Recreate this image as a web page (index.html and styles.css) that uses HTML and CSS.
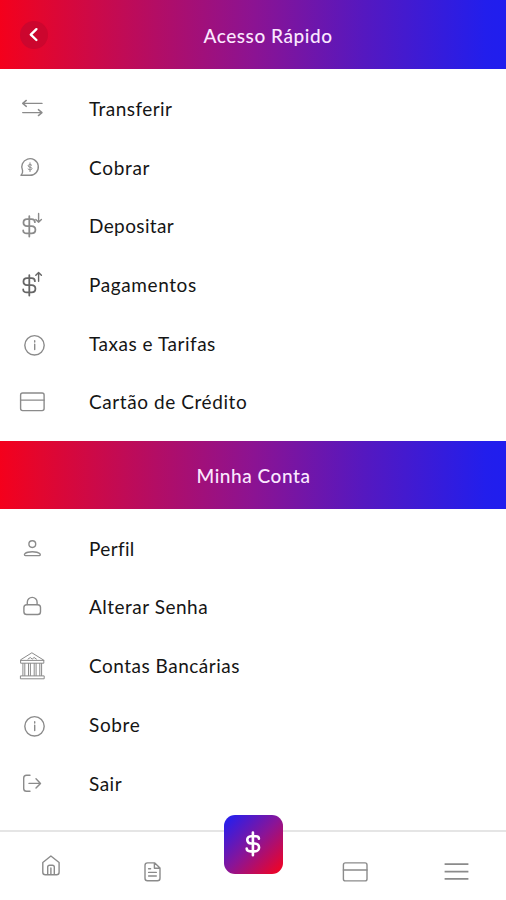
FILE: index.html
```html
<!DOCTYPE html>
<html lang="pt-BR">
<head>
<meta charset="utf-8">
<meta name="viewport" content="width=device-width, initial-scale=1">
<title>Acesso Rápido</title>
<link rel="stylesheet" href="styles.css">
</head>
<body>
<div class="app">
  <header class="bar">
    <button class="back" aria-label="Voltar"><svg viewBox="0 0 28 28"><path d="M16.4 8.2 10.8 13.6l5.6 5.4"/></svg></button>
    <h1 class="title title-quick">Acesso Rápido</h1>
  </header>
  <ul class="menu">
    <li class="row"><svg class="icon" viewBox="0 0 32 32"><path d="M26 10.4H6.7M10.3 7.4 6.7 10.4l3.6 3M6.7 19.6H26M22.4 16.6l3.6 3-3.6 3"/></svg><span class="l-transferir">Transferir</span></li>
    <li class="row"><svg class="icon" viewBox="0 0 32 32"><path d="M5 23.3h9a8.3 8.3 0 1 0-7.4-4.6Q7 21.6 5 23.3Z"/><path class="thin" d="M15.8 13.2c-.6-1-3.7-1-3.7.6 0 1.9 3.9.8 3.9 2.8 0 1.6-3.2 1.7-4 .4M14 10.8v8.8"/></svg><span class="l-cobrar">Cobrar</span></li>
    <li class="row"><svg class="icon" viewBox="0 0 32 32"><path class="money" d="M18.9 12.2c0-2.2-1.4-3-3.4-3H11c-4.7 0-4.7 7 0 7h4.5c5.2 0 5.2 7.2 0 7.2h-4.9c-2 0-3.4-1-3.4-3M13.3 6.2v20.3"/><path d="M22.6 3.4v8.8M19.8 9.4l2.8 2.8 2.8-2.8"/></svg><span class="l-depositar">Depositar</span></li>
    <li class="row"><svg class="icon dark" viewBox="0 0 32 32"><path class="money" d="M18.9 12.2c0-2.2-1.4-3-3.4-3H11c-4.7 0-4.7 7 0 7h4.5c5.2 0 5.2 7.2 0 7.2h-4.9c-2 0-3.4-1-3.4-3M13.3 6.2v20.3"/><path d="M22.6 12.2V3.4M19.8 6.2l2.8-2.8 2.8 2.8"/></svg><span class="l-pagamentos">Pagamentos</span></li>
    <li class="row"><svg class="icon" viewBox="0 0 32 32"><circle cx="18.5" cy="17.3" r="9.7"/><path d="M18.7 16.2v5.4M18.7 12.7v1.4"/></svg><span class="l-taxas">Taxas e Tarifas</span></li>
    <li class="row"><svg class="icon" viewBox="0 0 32 32"><rect x="4.6" y="7" width="23.5" height="17.6" rx="2"/><path d="M4.6 14.1h23.5"/></svg><span class="l-cartao">Cartão de Crédito</span></li>
  </ul>
  <header class="bar bar-account">
    <h2 class="title title-account">Minha Conta</h2>
  </header>
  <ul class="menu">
    <li class="row"><svg class="icon" viewBox="0 0 32 32"><circle cx="16.3" cy="11.1" r="3.4"/><path d="M9.4 22.6h14c1.3 0 .9-1.4.2-2.1-2.5-2.4-12-2.4-14.5 0-.8.7-1 2.1.3 2.1Z"/></svg><span class="l-perfil">Perfil</span></li>
    <li class="row"><svg class="icon" viewBox="0 0 32 32"><rect x="7.9" y="13.7" width="16.6" height="9.8" rx="2.8"/><path d="M11.3 13.5v-2.2a4.9 4.9 0 0 1 9.8 0v2.2"/></svg><span class="l-senha">Alterar Senha</span></li>
    <li class="row"><svg class="icon bank" viewBox="0 0 32 32"><path d="m16.2 3 11.6 7.2v3H4.6v-3ZM4.6 10.4h23.2M12 9.1l2.3-1.6 1.9 1.6 1.9-1.6 2.3 1.6M4.4 28.4v-2.5h23.8v2.5ZM6.9 13.5v12M8.8 13.5v12M12.5 13.5v12M14.4 13.5v12M18.2 13.5v12M20.1 13.5v12M23.8 13.5v12M25.6 13.5v12"/></svg><span class="l-contas">Contas Bancárias</span></li>
    <li class="row"><svg class="icon" viewBox="0 0 32 32"><circle cx="18.5" cy="17.3" r="9.7"/><path d="M18.7 16.2v5.4M18.7 12.7v1.4"/></svg><span class="l-sobre">Sobre</span></li>
    <li class="row"><svg class="icon" viewBox="0 0 32 32"><path d="M14 7.3h-3.5q-2.8 0-2.8 2.8v10.4q0 2.8 2.8 2.8H14M13 15.4h11.3M20 10.8l4.5 4.6L20 20"/></svg><span class="l-sair">Sair</span></li>
  </ul>
  <nav class="tabs">
    <a class="tab"><svg class="icon" viewBox="0 0 32 32"><path d="M7.8 12.5 15.9 6l8.2 6.5v9.8q0 2.5-2.5 2.5H10.3q-2.5 0-2.5-2.5ZM12.7 24.5v-7.4q0-1.9 1.9-1.9h2.8q1.9 0 1.9 1.9v7.4M15.9 18v6.5"/></svg></a>
    <a class="tab tab-low"><svg class="icon" viewBox="0 0 32 32"><path d="M18.8 6.9h-7.3q-2.5 0-2.5 2.5v12.8q0 2.5 2.5 2.5h10q2.5 0 2.5-2.5V12ZM18.4 7v5.2H24M12.6 12.8h2M12.6 16.4h7.7M12.6 20h7.7"/></svg></a>
    <a class="tab fab"><svg viewBox="0 0 60 60"><path d="M35.9 24.7c0-1.9-1.3-2.5-3-2.5H28c-5 0-5 7.3 0 7.3h3.7c5.8 0 5.8 7.9 0 7.9h-4.2c-2.5 0-3.8-.8-3.8-2.8M29.9 18.5v22.8"/></svg></a>
    <a class="tab tab-low"><svg class="icon" viewBox="0 0 32 32"><rect x="5.4" y="6.9" width="23.6" height="18" rx="2"/><path d="M5.4 14h23.6"/></svg></a>
    <a class="tab tab-low"><svg class="icon lines" viewBox="0 0 32 32"><path d="M5.6 8.1h23.8M5.6 15.6h23.8M5.6 22.9h23.8"/></svg></a>
  </nav>
</div>
</body>
</html>
```
FILE: styles.css
```css
* { box-sizing: border-box; }
body { margin: 0; background: #fff; }
.app {
  display: flex;
  flex-direction: column;
  height: 900px;
  overflow: hidden;
  color: #151515;
  font-family: Lato, "Open Sans", sans-serif;
  font-size: 19px;
  letter-spacing: 0.5px;
}
svg { display: block; fill: none; stroke-linecap: round; stroke-linejoin: round; }
.bar {
  flex: none;
  display: grid;
  grid-template-columns: 60px 1fr 60px;
  align-items: center;
  height: 69px;
  padding-top: 1px;
  background: linear-gradient(90deg, #f4001c 0%, #e2062f 8%, #8c1392 50%, #5518c0 72%, #221eec 96%, #201eee 100%);
}
.bar-account { height: 68px; margin-top: 9.3px; }
.title {
  grid-column: 2;
  margin: 0;
  color: #fbe8ff;
  font-size: 19px;
  font-weight: 500;
  letter-spacing: 0.55px;
  text-align: center;
  white-space: nowrap;
}
.title-quick { padding-left: 30px; }
.title-account { padding-left: 1px; }
.back {
  width: 28px;
  height: 28px;
  margin-left: 20px;
  padding: 0;
  border: 0;
  border-radius: 50%;
  background: #cc062e;
}
.back svg { width: 28px; height: 28px; stroke: #fff; stroke-width: 2.4; }
.menu { flex: none; margin: 10.5px 0 0; padding: 0; list-style: none; }
.row {
  display: flex;
  align-items: center;
  gap: 41px;
  height: 58.7px;
  padding-left: 16px;
  line-height: 24px;
  white-space: nowrap;
}
.l-transferir { letter-spacing: 0.45px; }
.l-cobrar { letter-spacing: 0.7px; }
.l-depositar { letter-spacing: 0.38px; }
.l-pagamentos { letter-spacing: 0.6px; }
.l-taxas { letter-spacing: 0.52px; }
.l-cartao { letter-spacing: 0.58px; }
.l-perfil { letter-spacing: 0.35px; }
.l-sobre { letter-spacing: 0.65px; }
.icon { flex: none; width: 32px; height: 32px; stroke: #8b8b8b; stroke-width: 1.4; }
.thin { stroke-width: 1; }
.money { stroke-width: 1.8; }
.dark { stroke: #666; }
.bank { stroke-width: 1; }
.lines { stroke-width: 1.9; stroke-linecap: butt; }
.tabs {
  flex: none;
  display: grid;
  grid-template-columns: repeat(5, 1fr);
  height: 70px;
  margin-top: auto;
  border-top: 2px solid #e5e5e5;
}
.tab { display: flex; justify-content: center; padding-top: 18px; }
.tab-low { padding-top: 24px; }
.fab {
  justify-self: center;
  align-items: center;
  width: 59px;
  height: 59px;
  margin-top: -17.5px;
  margin-left: 1px;
  padding: 0;
  border-radius: 11px;
  background: linear-gradient(135deg, #2c1ee8 8%, #8a1497 50%, #e8052d 92%);
}
.fab svg { flex: none; width: 60px; height: 60px; stroke: #fff; stroke-width: 2.6; }
```
